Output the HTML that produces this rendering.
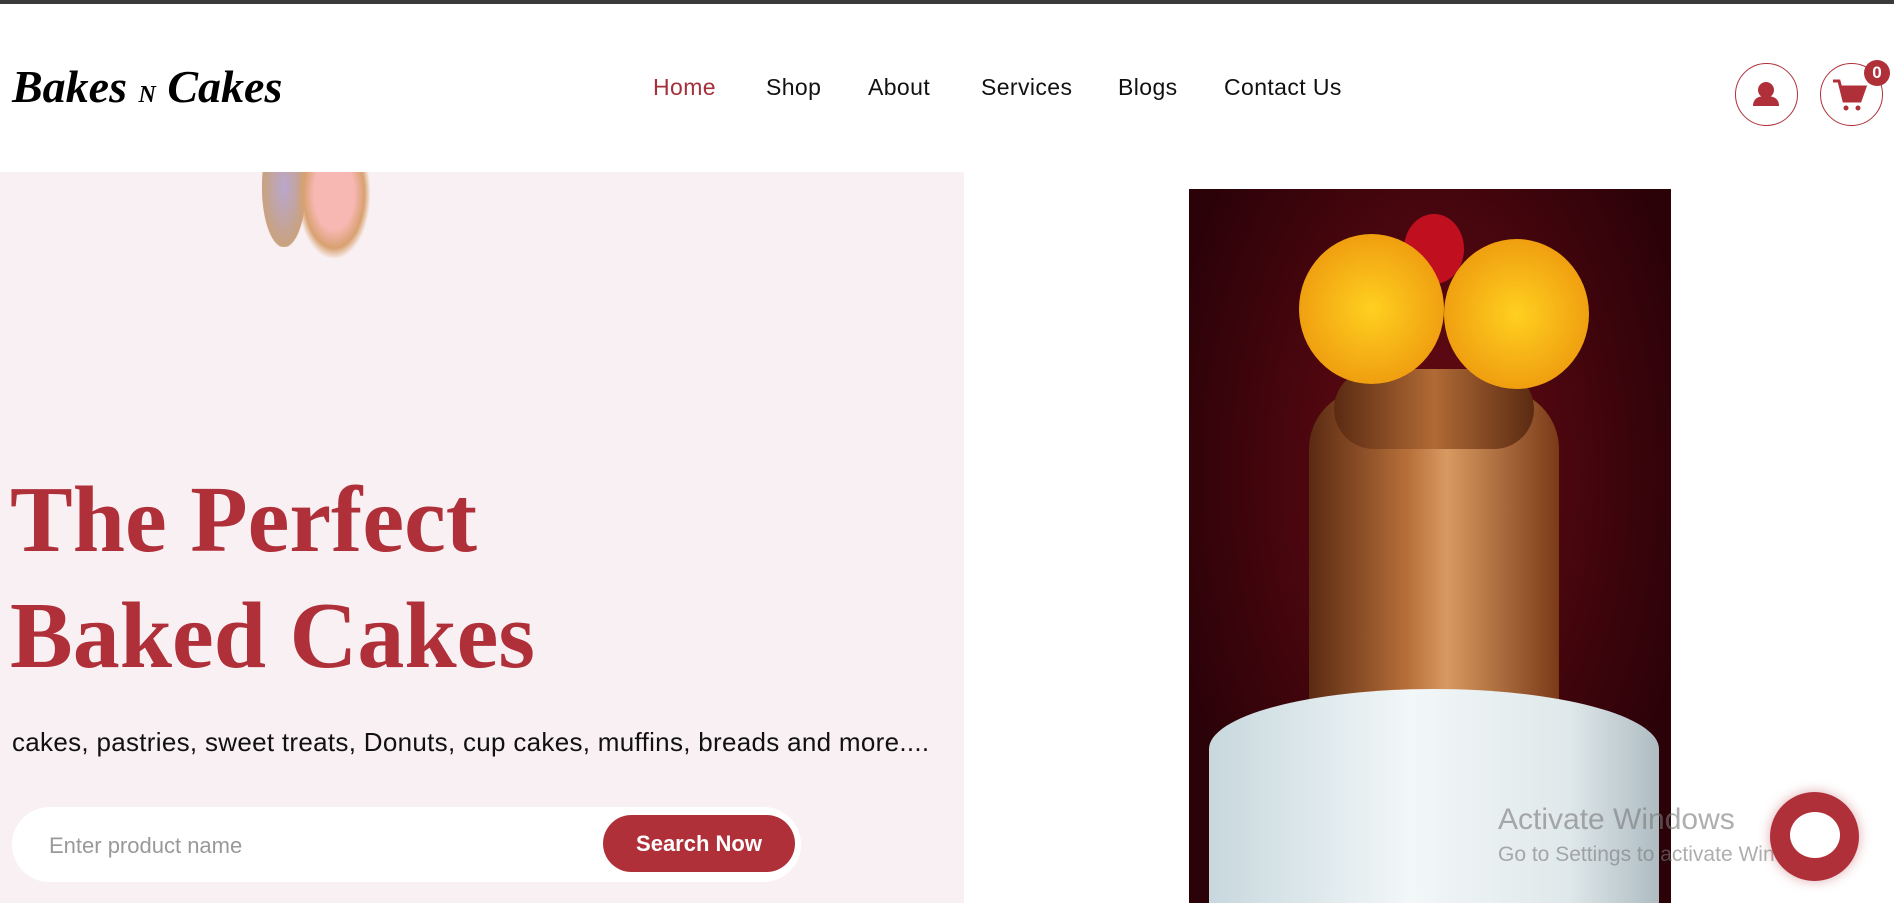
<!DOCTYPE html>
<html><head><meta charset="utf-8"><style>
*{margin:0;padding:0;box-sizing:border-box}
html,body{width:1894px;height:903px;overflow:hidden}
body{background:#fff;font-family:"Liberation Sans",sans-serif;position:relative}
.top{position:absolute;left:0;top:0;width:100%;height:4px;background:#3a3a3a}
.logo{position:absolute;left:12px;top:60px;font-family:"Liberation Serif",serif;font-style:italic;font-weight:bold;font-size:46px;color:#000}
.nav a{position:absolute;top:74px;font-size:23px;letter-spacing:0.4px;color:#111;text-decoration:none}
.circ{position:absolute;width:63px;height:63px;border:1.5px solid #b0303a;border-radius:50%}
.pink{position:absolute;left:0;top:172px;width:964px;height:731px;background:#f9f0f3}
h1{position:absolute;left:10px;top:462px;font-family:"Liberation Serif",serif;font-weight:bold;font-size:94px;line-height:116px;color:#b0303a}
.sub{position:absolute;left:12px;top:727px;font-size:26px;letter-spacing:0.3px;color:#111}
.search{position:absolute;left:12px;top:807px;width:789px;height:75px;background:#fff;border-radius:38px}
.search span{position:absolute;left:37px;top:26px;font-size:22px;color:#999}
.btn{position:absolute;left:603px;top:815px;width:192px;height:57px;background:#b0303a;border-radius:29px;color:#fff;font-size:22px;font-weight:bold;text-align:center;line-height:57px}
.cake{position:absolute;left:1189px;top:189px;width:482px;height:714px;background:radial-gradient(ellipse at 50% 40%,#6a0a14,#2a0208 80%);overflow:hidden}
.win{position:absolute;left:1498px;color:rgba(120,120,120,.6);white-space:nowrap}
</style></head><body>
<div class="top"></div>
<div class="logo">Bakes <span style="font-size:24px">N</span> Cakes</div>
<div class="nav">
<a style="left:653px;color:#a3303a">Home</a><a style="left:766px">Shop</a><a style="left:868px">About</a><a style="left:981px">Services</a><a style="left:1118px">Blogs</a><a style="left:1224px">Contact Us</a>
</div>
<div class="circ" style="left:1735px;top:63px"><svg width="60" height="60" viewBox="0 0 60 60"><circle cx="30" cy="26" r="8" fill="#b0303a"/><path d="M17 42c0-8 6-10 13-10s13 2 13 10z" fill="#b0303a"/></svg></div>
<div class="circ" style="left:1820px;top:63px"><svg width="60" height="60" viewBox="0 0 60 60"><path d="M12 17h6l5 20h16l5-14H20" fill="none" stroke="#b0303a" stroke-width="3"/><path d="M20 23h24l-5 14H23z" fill="#b0303a"/><circle cx="25" cy="44" r="2.5" fill="#b0303a"/><circle cx="37" cy="44" r="2.5" fill="#b0303a"/></svg></div>
<div style="position:absolute;left:1864px;top:60px;width:26px;height:26px;border-radius:50%;background:#b0303a;color:#fff;font-weight:bold;font-size:17px;text-align:center;line-height:26px">0</div>
<div class="pink"></div>
<div style="position:absolute;left:262px;top:172px;width:44px;height:75px;background:radial-gradient(ellipse at 50% 20%,#b9a7cf,#c9a27e 70%,transparent 72%)"></div>
<div style="position:absolute;left:298px;top:172px;width:72px;height:86px;background:radial-gradient(ellipse at 50% 25%,#f7b7b2 40%,#d8a170 60%,transparent 72%)"></div>
<h1>The Perfect<br>Baked Cakes</h1>
<div class="sub">cakes, pastries, sweet treats, Donuts, cup cakes, muffins, breads and more....</div>
<div class="search"><span>Enter product name</span></div>
<div class="btn">Search Now</div>
<div class="cake">
<div style="position:absolute;left:120px;top:200px;width:250px;height:360px;border-radius:60px 60px 20px 20px;background:linear-gradient(90deg,#5a2a12,#b8703a 40%,#d89a60 55%,#7a3a18)"></div>
<div style="position:absolute;left:145px;top:180px;width:200px;height:80px;border-radius:40px;background:linear-gradient(90deg,#5a2a12,#b06a35,#5a2a12)"></div>
<div style="position:absolute;left:215px;top:25px;width:60px;height:70px;background:#c01020;border-radius:50%"></div>
<div style="position:absolute;left:110px;top:45px;width:145px;height:150px;border-radius:50%;background:radial-gradient(circle,#ffd020,#f0a010 70%,#d08000)"></div>
<div style="position:absolute;left:255px;top:50px;width:145px;height:150px;border-radius:50%;background:radial-gradient(circle,#ffd020,#f0a010 70%,#d08000)"></div>
<div style="position:absolute;left:20px;top:500px;width:450px;height:260px;border-radius:50% 50% 0 0/60px 60px 0 0;background:linear-gradient(90deg,#c8d8de,#f2f7f8 45%,#dfe8ea 80%,#aebcc2)"></div>
</div>
<div class="win" style="top:803px;font-size:30px">Activate Windows</div>
<div class="win" style="top:843px;font-size:21px">Go to Settings to activate Windows.</div>
<div style="position:absolute;left:1770px;top:792px;width:89px;height:89px;border-radius:50%;background:#b0303a;box-shadow:0 0 12px rgba(176,48,58,.4)"><div style="position:absolute;left:20px;top:20px;width:50px;height:46px;border-radius:50%;background:#fff"></div></div>
</body></html>
